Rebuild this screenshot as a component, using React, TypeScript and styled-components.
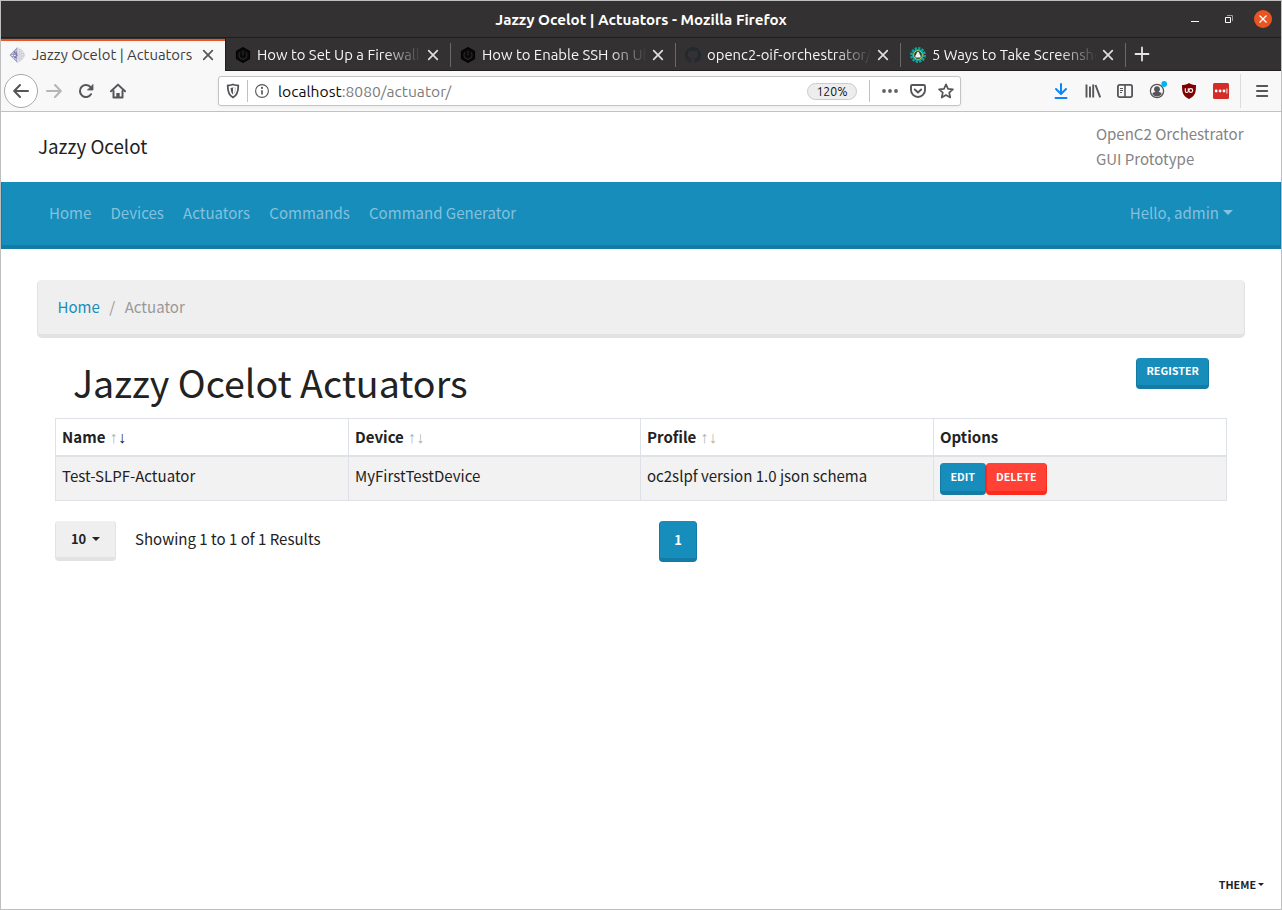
import React from "react";
import styled, { createGlobalStyle, css } from "styled-components";

const uiFont = `Ubuntu, "Noto Sans", "Open Sans", sans-serif`;
const pageFont = `"Source Sans Pro", "Noto Sans CJK SC", "Noto Sans", sans-serif`;

const GlobalStyle = createGlobalStyle`
  *, *::before, *::after { box-sizing: border-box; }
  body { margin: 0; background: #fff; }
  button { font: inherit; }
  svg { display: block; flex: none; }
`;

const Window = styled.div`
  width: 1282px;
  height: 910px;
  display: flex;
  flex-direction: column;
  border: 1px solid #bfbfbf;
  overflow: hidden;
  background: #fff;
`;

/* ---------- window chrome ---------- */

const TitleBar = styled.header`
  height: 37px;
  flex: none;
  display: grid;
  grid-template-columns: 1fr auto 1fr;
  align-items: center;
  background: #333132;
  border-bottom: 1px solid #1f1e1e;
  color: #fff;
  font: 700 15.17px/20px ${uiFont};
`;

const WindowTitle = styled.h1`
  grid-column: 2;
  margin: 0;
  padding-top: 2px;
  font: inherit;
`;

const WindowControls = styled.div`
  display: flex;
  justify-content: flex-end;
  align-items: center;
  gap: 16px;
  padding-right: 9px;
`;

const TabStrip = styled.div`
  height: 33px;
  flex: none;
  display: flex;
  background: #333132;
`;

const TabItem = styled.div<{ $active?: boolean; $first?: boolean }>`
  width: 225px;
  display: flex;
  align-items: center;
  padding: 2px 11px 0 10px;
  font: 400 14.87px/20px ${uiFont};
  color: #f5f5f5;
  border-bottom: 1px solid #1f1e1e;
  ${(p) =>
    p.$active &&
    css`
      width: 224px;
      padding: 0 11px 2px 8px;
      background: #f8f8f8;
      color: #3d3d3d;
      border-top: 2px solid #ee5522;
      border-bottom: 0;
      margin-top: 1px;
    `}
  ${(p) =>
    p.$first &&
    css`
      padding-left: 9px;
      border-left: 1px solid #1f1e1e;
    `}
`;

const TabLabel = styled.span<{ $fade?: boolean }>`
  width: 165px;
  margin-left: 6px;
  flex: none;
  white-space: nowrap;
  ${(p) =>
    p.$fade &&
    css`
      mask-image: linear-gradient(to right, #000 calc(100% - 38px), transparent);
    `}
`;

const TabClose = styled.div`
  margin-left: auto;
`;

const TabDivider = styled.div`
  width: 1px;
  height: 24px;
  align-self: center;
  margin-right: -1px;
  background: #69696a;
`;

const NewTab = styled.div`
  flex: 1;
  display: flex;
  align-items: center;
  padding-left: 9px;
  border-bottom: 1px solid #1f1e1e;
`;

const NavToolbar = styled.div`
  height: 41px;
  flex: none;
  display: flex;
  align-items: center;
  padding: 0 0 1px 3px;
  background: #f8f8f8;
  border-bottom: 1px solid #c1c1c0;
`;

const BackButton = styled.div`
  width: 34px;
  height: 34px;
  flex: none;
  display: grid;
  place-items: center;
  border: 1px solid #a9a9a9;
  border-radius: 50%;
  background: #fff;
`;

const ToolIcon = styled.div`
  width: 32px;
  flex: none;
  display: grid;
  place-items: center;
`;

const UrlBar = styled.div`
  width: 743px;
  height: 30px;
  flex: none;
  margin: 0 84px 0 84px;
  display: flex;
  align-items: center;
  background: #fff;
  border: 1px solid #c4c4c4;
  border-radius: 3px;
  box-shadow: 0 1px 3px rgba(0, 0, 0, 0.06);
  font: 400 15.65px/20px ${uiFont};
  color: #7c7c7c;
`;

const UrlIcon = styled.div`
  width: 28px;
  display: grid;
  place-items: center;
`;

const PageActions = styled(UrlIcon)`
  width: 34px;
  padding-left: 6px;
`;

const UrlDivider = styled.div`
  width: 1px;
  height: 22px;
  background: #c0c0c0;
`;

const UrlText = styled.span`
  flex: 1;
  padding: 1px 0 0 2px;
`;

const Host = styled.span`
  color: #0c0c0d;
`;

const ZoomBadge = styled.span`
  width: 50px;
  height: 17px;
  margin: 1px 12px 0 0;
  border: 1px solid #cbcbcb;
  border-radius: 9px;
  background: #ededed;
  color: #111;
  font-size: 12.3px;
  line-height: 16px;
  text-align: center;
`;

const ToolDivider = styled.div`
  width: 1px;
  height: 34px;
  margin: 0 5px 0 3px;
  background: #dcdcdc;
`;

/* ---------- page ---------- */

const Page = styled.main`
  flex: 1;
  display: flex;
  flex-direction: column;
  font: 400 15.04px/25px ${pageFont};
  color: #222;
`;

const Masthead = styled.div`
  height: 70px;
  flex: none;
  display: flex;
  justify-content: space-between;
  align-items: center;
  padding: 0 37.5px 0 37px;
`;

const Brand = styled.a`
  padding-bottom: 2px;
  font-size: 18.8px;
  line-height: 30px;
`;

const Tagline = styled.p`
  margin: 0 0 2px;
  color: #848484;
`;

const NavBar = styled.nav`
  height: 67px;
  flex: none;
  display: flex;
  align-items: center;
  justify-content: space-between;
  padding: 0 47px 2px;
  background: #178dbb;
  border: 1px solid #147ca4;
  border-width: 0 1px 4px;
  color: #84c1dc;
`;

const NavLinks = styled.div`
  display: flex;
  gap: 19.2px;
`;

const Caret = styled.span<{ $size?: number }>`
  display: inline-block;
  margin-left: ${(p) => (p.$size ?? 5) - 1}px;
  vertical-align: ${(p) => ((p.$size ?? 5) > 4 ? 4 : 3)}px;
  border: ${(p) => p.$size ?? 5}px solid transparent;
  border-top-color: currentColor;
  border-bottom: 0;
`;

const Breadcrumb = styled.div`
  height: 58px;
  flex: none;
  margin: 31px 36px 0 36px;
  display: flex;
  gap: 9.5px;
  padding: 14px 19.5px;
  background: #efefef;
  border: 1px solid #e2e2e2;
  border-width: 0 1px 4px;
  border-radius: 5px;
  color: #999;
`;

const Crumb = styled.span<{ $link?: boolean }>`
  color: ${(p) => (p.$link ? "#178dbb" : "#999")};
`;

const HeadingRow = styled.div`
  height: 80px;
  flex: none;
  display: flex;
  justify-content: space-between;
  align-items: flex-start;
  padding: 20px 72px 0 72px;
`;

const Heading = styled.h2`
  margin: -1px 0 0;
  font-weight: 400;
  font-size: 37.6px;
  line-height: 50px;
`;

const tones = {
  primary: { bg: "#178dbb", edge: "#147ca4", fg: "#fff" },
  danger: { bg: "#ff4136", edge: "#ff291c", fg: "#fff" },
  muted: { bg: "#efefef", edge: "#e2e2e2", fg: "#222" },
};

const Button = styled.button<{ $tone: keyof typeof tones; $large?: boolean }>`
  flex: none;
  height: ${(p) => (p.$large ? 41 : 32)}px;
  padding: ${(p) => (p.$large ? "0 14px" : "0 9.5px")};
  background: ${(p) => tones[p.$tone].bg};
  border: 1px solid ${(p) => tones[p.$tone].edge};
  border-width: 0 1px 4px;
  border-radius: 4px;
  color: ${(p) => tones[p.$tone].fg};
  font-weight: 700;
  font-size: ${(p) => (p.$large ? 12.9 : 10.75)}px;
  line-height: 18px;
  white-space: nowrap;
`;

const RegisterButton = styled(Button)`
  width: 73px;
  height: 31px;
  padding-bottom: 2px;
`;

const Table = styled.table`
  width: 1172px;
  flex: none;
  margin-left: 54px;
  border-collapse: collapse;
  table-layout: fixed;
`;

const HeadCell = styled.th`
  height: 37px;
  padding: 0 6px 1px;
  border: 1px solid #dee2e6;
  border-bottom-width: 2px;
  text-align: left;
  font-weight: 700;
`;

const Cell = styled.td`
  height: 44px;
  padding: 6px 6px 5px;
  vertical-align: top;
  border: 1px solid #dee2e6;
  background: #f2f2f2;
`;

const Actions = styled.div`
  display: flex;
`;

const SortArrow = styled.span<{ $on?: boolean }>`
  display: inline-block;
  width: 8.5px;
  font: 400 16px/20px "Liberation Sans", sans-serif;
  color: ${(p) => (p.$on ? "#222" : "#b0b0b0")};
`;

const SortArrows = styled.span`
  margin-left: 4px;
`;

const TableFooter = styled.div`
  display: grid;
  grid-template-columns: 80px 524px auto;
  align-items: start;
  justify-content: start;
  padding: 20px 54px 0;
`;

const PageSizeButton = styled(Button)`
  width: 61px;
  height: 40px;
`;

const PageButton = styled(Button)`
  width: 38px;
  padding-top: 2px;
`;

const ResultCount = styled.span`
  padding-top: 5px;
`;

const ThemeMenu = styled.div`
  margin: auto 17px 15px auto;
  font-weight: 700;
  font-size: 10.75px;
  line-height: 18px;
`;

/* ---------- icons ---------- */

const ink = "#56565a";

const CloseX = ({ color }: { color: string }) => (
  <svg width="12" height="12" viewBox="0 0 12 12" stroke={color} strokeWidth="1.7" strokeLinecap="round">
    <path d="M1.7 1.7l8.6 8.6M10.3 1.7l-8.6 8.6" />
  </svg>
);

const OcelotFavicon = () => (
  <svg width="17" height="16" viewBox="0 0 17 16">
    <path d="M0.500 8L8.500 0v16z" fill="#9a9ac0" />
    <path d="M8.500 0l5 3 3 5-3 5-5 3z" fill="#dcdce2" />
    <path d="M3.500 6.500L8 3M2.500 8.500h6M4 10.500l5 3" stroke="#f4f4fa" strokeWidth="1" strokeDasharray="1.5 1" />
    <path d="M10.500 2v12M12.500 3.500v9M14.500 6v4" stroke="#c2c2ce" strokeWidth="1" strokeDasharray="1 1.500" />
    <path d="M5 4.500l3.500 3.500L5 11.500" fill="none" stroke="#6b6b9d" strokeWidth="1.200" strokeDasharray="1.500 1" />
  </svg>
);

const HexFavicon = () => (
  <svg width="16" height="16" viewBox="0 0 16 16">
    <path d="M8 .5l6.600 3.700v7.600L8 15.500l-6.600-3.700V4.200z" fill="#090909" stroke="#000" />
    <path d="M5.300 5.200a4 4 0 1 0 5.400 0M8 3.500v5" fill="none" stroke="#2b2b2b" strokeWidth="1.100" />
  </svg>
);

const GithubFavicon = () => (
  <svg width="16" height="16" viewBox="0 0 16 16" fill="#24292e">
    <path d="M8 0C3.580 0 0 3.580 0 8c0 3.540 2.290 6.530 5.470 7.590.4.070.55-.17.55-.38 0-.19-.01-.82-.01-1.490-2.010.37-2.530-.49-2.690-.94-.09-.23-.48-.94-.82-1.130-.28-.15-.68-.52-.01-.53.63-.01 1.080.58 1.230.82.720 1.210 1.870.87 2.330.66.070-.52.280-.87.510-1.070-1.780-.2-3.640-.89-3.640-3.950 0-.87.310-1.590.82-2.150-.08-.2-.36-1.020.08-2.120 0 0 .67-.21 2.200.82a7.600 7.600 0 0 1 4 0c1.530-1.040 2.200-.82 2.200-.82.440 1.100.160 1.920.080 2.120.510.560.820 1.270.820 2.150 0 3.070-1.870 3.750-3.650 3.950.290.250.540.730.540 1.480 0 1.070-.01 1.930-.01 2.200 0 .210.150.460.550.380A8 8 0 0 0 16 8c0-4.420-3.580-8-8-8z" />
  </svg>
);

const GearFavicon = () => (
  <svg width="16" height="16" viewBox="0 0 16 16">
    <circle cx="8" cy="8" r="6.700" fill="none" stroke="#12a5a0" strokeWidth="2.400" strokeDasharray="2.300 1.200" />
    <circle cx="8" cy="8" r="6" fill="#12a5a0" />
    <circle cx="8" cy="8" r="4.300" fill="#143c3d" stroke="#b9c94a" strokeWidth="1" />
    <path d="M5.300 10.500c0-3 .9-3.800 2.700-3.800s2.700.8 2.700 3.800z" fill="#f4f6ee" />
    <circle cx="8" cy="6.300" r="1.400" fill="#e8f1f1" />
  </svg>
);

const MinimizeIcon = () => (
  <svg width="18" height="18" viewBox="0 0 18 18">
    <path d="M5 11.500h8" stroke="#fff" />
  </svg>
);

const RestoreIcon = () => (
  <svg width="18" height="18" viewBox="0 0 18 18" fill="none">
    <path d="M7 5.500h5.500V11" stroke="#9a9a9a" />
    <path d="M5.500 7.500h5v5h-5z" stroke="#fff" />
  </svg>
);

const CloseWindowIcon = () => (
  <svg width="18" height="18" viewBox="0 0 18 18">
    <circle cx="9" cy="9" r="9" fill="#e95420" />
    <path d="M5.500 5.500l7 7M12.500 5.500l-7 7" stroke="#fff" strokeWidth="1.300" />
  </svg>
);

const PlusIcon = () => (
  <svg width="16" height="16" viewBox="0 0 16 16">
    <path d="M8 1.500v13M1.500 8h13" stroke="#e6e6e6" strokeWidth="1.800" strokeLinecap="round" />
  </svg>
);

const Line = ({ children, color = ink, width = 2 }: { children: React.ReactNode; color?: string; width?: number }) => (
  <svg width="16" height="16" viewBox="0 0 16 16" fill="none" stroke={color} strokeWidth={width} strokeLinecap="round" strokeLinejoin="round">
    {children}
  </svg>
);

const BackIcon = () => (
  <Line>
    <path d="M15 8H1.500M7 2L1.200 8 7 14" />
  </Line>
);
const ForwardIcon = () => (
  <Line color="#b5b5b6">
    <path d="M1 8h13.500M9 2l5.800 6L9 14" />
  </Line>
);
const ReloadIcon = () => (
  <Line>
    <path d="M13 11.200A6 6 0 1 1 12.600 4.200" />
    <path d="M15 1.800v5.200H9.800z" fill={ink} strokeWidth=".8" />
  </Line>
);
const HomeIcon = () => (
  <Line>
    <path d="M1 8.300L8 1.600l7 6.700" />
    <path d="M3.500 8v6.500h9V8" />
    <path d="M8 14.500V10" strokeWidth="3.400" strokeLinecap="butt" />
  </Line>
);
const ShieldIcon = () => (
  <svg width="14" height="16" viewBox="0 0 14 16" fill="none">
    <path d="M7 1.500c2 .7 3.700 1 5.300 1 0 5.300-.6 9.700-5.300 12C2.300 12.200 1.700 7.800 1.700 2.500c1.600 0 3.300-.3 5.300-1z" stroke={ink} strokeWidth="1.800" strokeLinejoin="round" />
    <path d="M7 4.500c-.9.300-1.600.4-2.400.5.100 2.800.6 5.200 2.400 6.500z" fill={ink} />
    <path d="M7 4.500c.9.300 1.600.4 2.400.5-.1 2.800-.6 5.200-2.400 6.500" stroke="#aaa" strokeWidth=".6" />
  </svg>
);
const InfoIcon = () => (
  <svg width="14" height="14" viewBox="0 0 14 14" fill="none">
    <circle cx="7" cy="7" r="6.400" stroke={ink} strokeWidth="1.100" />
    <path d="M7 6.200v4.300" stroke={ink} strokeWidth="1.700" />
    <circle cx="7" cy="3.900" r="1.050" fill={ink} />
  </svg>
);
const DotsIcon = () => (
  <svg width="16" height="16" viewBox="0 0 16 16" fill="#616164">
    <circle cx="2" cy="8" r="1.900" />
    <circle cx="8" cy="8" r="1.900" />
    <circle cx="14" cy="8" r="1.900" />
  </svg>
);
const PocketIcon = () => (
  <Line width={1.9}>
    <path d="M2.200 2h11.600c.7 0 1.200.5 1.200 1.200V7a7 7 0 0 1-14 0V3.200C1 2.500 1.500 2 2.200 2z" />
    <path d="M4.800 6.500L8 9.500l3.200-3" />
  </Line>
);
const StarIcon = () => (
  <Line width={1.7}>
    <path d="M8 1.300l2 4.500 4.900.5-3.700 3.300 1.100 4.900L8 12l-4.300 2.500 1.100-4.900L1.100 6.300 6 5.800z" />
  </Line>
);
const DownloadIcon = () => (
  <Line color="#0a84ff">
    <path d="M8 1v9.500M3 6l5 5 5-5M2.500 15h11" />
  </Line>
);
const LibraryIcon = () => (
  <svg width="16" height="16" viewBox="0 0 16 16" stroke={ink} strokeWidth="1.900" fill="none">
    <path d="M1.500 1.500v13M5 3.500v11M8.200 1.500v13M10.500 2l4.700 12.300" />
  </svg>
);
const SidebarIcon = () => (
  <svg width="16" height="16" viewBox="0 0 16 16" stroke={ink} fill="none">
    <rect x=".9" y="1.900" width="14.200" height="12.200" rx="1.800" strokeWidth="1.800" />
    <path d="M8 2v12" strokeWidth="1.600" />
    <path d="M3 5.500h3M3 7.500h3M3 9.500h2" strokeWidth="1" />
  </svg>
);
const AccountIcon = () => (
  <svg width="20" height="20" viewBox="0 0 20 20">
    <circle cx="10" cy="10" r="6.600" fill="none" stroke={ink} strokeWidth="1.300" />
    <circle cx="10" cy="8.200" r="2.900" fill={ink} />
    <path d="M5.300 13c.3-1.400 1.800-1.800 2.700-1.900h4c1 .1 2.400.5 2.700 1.900-1 1.600-2.700 2.500-4.700 2.500S6.300 14.600 5.300 13z" fill={ink} />
    <circle cx="17.200" cy="3" r="2.900" fill="#00b3f4" />
  </svg>
);
const UblockIcon = () => (
  <svg width="16" height="16" viewBox="0 0 16 16">
    <path d="M8 0c2 1.400 4.500 2 7 2 0 7-.5 11-7 14C1.500 13 1 9 1 2c2.500 0 5-.6 7-2z" fill="#800000" />
    <path d="M4.300 5.200v2.800a1.500 1.500 0 0 0 3 0V5.200" fill="none" stroke="#fff" strokeWidth="1.100" />
    <circle cx="9.800" cy="7.500" r="1.900" fill="none" stroke="#fff" strokeWidth="1.100" />
  </svg>
);
const PasswordIcon = () => (
  <svg width="16" height="16" viewBox="0 0 16 16">
    <rect width="16" height="16" rx="1.500" fill="#d32d27" />
    <circle cx="3.200" cy="8" r="1.400" fill="#fff" />
    <circle cx="7.100" cy="8" r="1.400" fill="#fff" />
    <circle cx="11" cy="8" r="1.400" fill="#fff" />
    <path d="M13.900 5.500v5" stroke="#fff" strokeWidth=".9" />
  </svg>
);
const MenuIcon = () => (
  <svg width="16" height="16" viewBox="0 0 16 16" stroke={ink} strokeWidth="2" strokeLinecap="round">
    <path d="M3 3h10.200M3 8h10.200M3 13h10.200" />
  </svg>
);

/* ---------- composition ---------- */

const backgroundTabs = [
  { title: "How to Set Up a Firewall", icon: <HexFavicon /> },
  { title: "How to Enable SSH on Ub", icon: <HexFavicon /> },
  { title: "openc2-oif-orchestrator/", icon: <GithubFavicon /> },
  { title: "5 Ways to Take Screensho", icon: <GearFavicon /> },
];

const toolbarIcons = [DownloadIcon, LibraryIcon, SidebarIcon, AccountIcon, UblockIcon, PasswordIcon];

const columns: { label: string; sort?: "none" | "desc" }[] = [
  { label: "Name", sort: "desc" },
  { label: "Device", sort: "none" },
  { label: "Profile", sort: "none" },
  { label: "Options" },
];

export default function App() {
  return (
    <Window>
      <GlobalStyle />
      <TitleBar>
        <WindowTitle>Jazzy Ocelot | Actuators - Mozilla Firefox</WindowTitle>
        <WindowControls>
          <MinimizeIcon />
          <RestoreIcon />
          <CloseWindowIcon />
        </WindowControls>
      </TitleBar>

      <TabStrip>
        <TabItem $active>
          <OcelotFavicon />
          <TabLabel>Jazzy Ocelot | Actuators</TabLabel>
          <TabClose>
            <CloseX color="#55555a" />
          </TabClose>
        </TabItem>
        {backgroundTabs.map((tab, i) => (
          <React.Fragment key={tab.title}>
            <TabItem $first={i === 0}>
              {tab.icon}
              <TabLabel $fade>{tab.title}</TabLabel>
              <TabClose>
                <CloseX color="#dedede" />
              </TabClose>
            </TabItem>
            <TabDivider />
          </React.Fragment>
        ))}
        <NewTab>
          <PlusIcon />
        </NewTab>
      </TabStrip>

      <NavToolbar>
        <BackButton>
          <BackIcon />
        </BackButton>
        <ToolIcon>
          <ForwardIcon />
        </ToolIcon>
        <ToolIcon>
          <ReloadIcon />
        </ToolIcon>
        <ToolIcon>
          <HomeIcon />
        </ToolIcon>
        <UrlBar>
          <UrlIcon>
            <ShieldIcon />
          </UrlIcon>
          <UrlDivider />
          <UrlIcon>
            <InfoIcon />
          </UrlIcon>
          <UrlText>
            <Host>localhost</Host>:8080/actuator/
          </UrlText>
          <ZoomBadge>120%</ZoomBadge>
          <UrlDivider />
          <PageActions>
            <DotsIcon />
          </PageActions>
          <UrlIcon>
            <PocketIcon />
          </UrlIcon>
          <UrlIcon>
            <StarIcon />
          </UrlIcon>
        </UrlBar>
        {toolbarIcons.map((Icon, i) => (
          <ToolIcon key={i}>
            <Icon />
          </ToolIcon>
        ))}
        <ToolDivider />
        <ToolIcon>
          <MenuIcon />
        </ToolIcon>
      </NavToolbar>

      <Page>
        <Masthead>
          <Brand>Jazzy Ocelot</Brand>
          <Tagline>
            OpenC2 Orchestrator
            <br />
            GUI Prototype
          </Tagline>
        </Masthead>
        <NavBar>
          <NavLinks>
            <span>Home</span>
            <span>Devices</span>
            <span>Actuators</span>
            <span>Commands</span>
            <span>Command Generator</span>
          </NavLinks>
          <span>
            Hello, admin
            <Caret />
          </span>
        </NavBar>
        <Breadcrumb>
          <Crumb $link>Home</Crumb>
          <span>/</span>
          <Crumb>Actuator</Crumb>
        </Breadcrumb>
        <HeadingRow>
          <Heading>Jazzy Ocelot Actuators</Heading>
          <RegisterButton $tone="primary">REGISTER</RegisterButton>
        </HeadingRow>
        <Table>
          <colgroup>
            <col width="293" />
            <col width="292" />
            <col width="293" />
            <col />
          </colgroup>
          <thead>
            <tr>
              {columns.map((c) => (
                <HeadCell key={c.label}>
                  {c.label}
                  {c.sort && (
                    <SortArrows>
                      <SortArrow>↑</SortArrow>
                      <SortArrow $on={c.sort === "desc"}>↓</SortArrow>
                    </SortArrows>
                  )}
                </HeadCell>
              ))}
            </tr>
          </thead>
          <tbody>
            <tr>
              <Cell>Test-SLPF-Actuator</Cell>
              <Cell>MyFirstTestDevice</Cell>
              <Cell>oc2slpf version 1.0 json schema</Cell>
              <Cell>
                <Actions>
                  <Button $tone="primary">EDIT</Button>
                  <Button $tone="danger">DELETE</Button>
                </Actions>
              </Cell>
            </tr>
          </tbody>
        </Table>
        <TableFooter>
          <PageSizeButton $tone="muted" $large>
            10 <Caret $size={4} />
          </PageSizeButton>
          <ResultCount>Showing 1 to 1 of 1 Results</ResultCount>
          <PageButton $tone="primary" $large>
            1
          </PageButton>
        </TableFooter>
        <ThemeMenu>
          THEME
          <Caret $size={3} />
        </ThemeMenu>
      </Page>
    </Window>
  );
}
